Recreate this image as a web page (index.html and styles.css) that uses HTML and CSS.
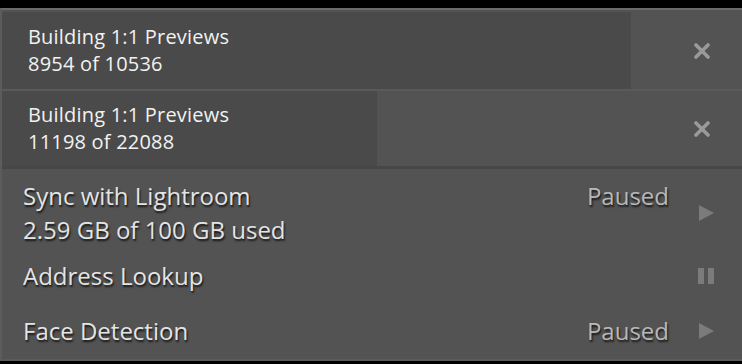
FILE: index.html
```html
<!DOCTYPE html>
<html lang="en">
<head>
  <meta charset="UTF-8" />
  <title>Activity Center</title>
  <link rel="stylesheet" href="styles.css">
</head>
<body>

<div class="panel">
  <div class="jobs">
    <div class="job" style="--p: 84.98%">
      <div class="job-text">
        <div>Building 1:1 Previews</div>
        <div>8954 of 10536</div>
      </div>
      <svg class="close" width="18" height="16" viewBox="0 0 18 16">
        <path d="M3 2 L15 14 M15 2 L3 14" stroke="#9a9a9a" stroke-width="3.6" stroke-linecap="round" />
      </svg>
    </div>
    <div class="job" style="--p: 50.70%">
      <div class="job-text">
        <div>Building 1:1 Previews</div>
        <div>11198 of 22088</div>
      </div>
      <svg class="close" width="18" height="16" viewBox="0 0 18 16">
        <path d="M3 2 L15 14 M15 2 L3 14" stroke="#9a9a9a" stroke-width="3.6" stroke-linecap="round" />
      </svg>
    </div>
  </div>

  <div class="tasks">
    <div class="task task-sync">
      <div class="task-name">
        <div>Sync with Lightroom</div>
        <div>2.59 GB of 100 GB used</div>
      </div>
      <div class="task-status">Paused</div>
      <svg class="task-icon" width="16" height="16" viewBox="0 0 16 16">
        <polygon points="1,0 16,8 1,16" fill="#7b7b7b" />
      </svg>
    </div>
    <div class="task task-address">
      <div class="task-name">Address Lookup</div>
      <svg class="task-icon" width="16" height="16" viewBox="0 0 16 16">
        <rect x="0" y="0" width="6" height="16" fill="#7b7b7b" />
        <rect x="10" y="0" width="6" height="16" fill="#7b7b7b" />
      </svg>
    </div>
    <div class="task task-face">
      <div class="task-name">Face Detection</div>
      <div class="task-status">Paused</div>
      <svg class="task-icon" width="16" height="16" viewBox="0 0 16 16">
        <polygon points="1,0 16,8 1,16" fill="#7b7b7b" />
      </svg>
    </div>
  </div>
</div>

</body>
</html>
```

FILE: styles.css
```css
* { margin: 0; padding: 0; box-sizing: border-box; }
html, body { height: 100%; overflow: hidden; }

body {
  background: #000;
  padding-top: 8px;
  font-family: 'Open Sans', 'Liberation Sans', sans-serif;
}

.panel {
  height: 353px;
  background: #535353;
  border-top: 2px solid #6b6b6b;
  border-left: 2px solid #5c5c5c;
  border-bottom: 2px solid #5a5a5a;
}

.jobs {
  padding-top: 2px;
  border-bottom: 3px solid #474747;
}

.job {
  height: 77px;
  display: flex;
  align-items: center;
  padding: 0 31px 0 26px;
  background: linear-gradient(to right, #4a4a4a var(--p), #535353 var(--p));
}
.job + .job { border-top: 2px solid #5a5a5a; }

.job-text {
  flex: 1;
  color: #f2f2f2;
  font-size: 20px;
  letter-spacing: 0.2px;
  line-height: 27px;
  margin-top: -2px;
}

.tasks {
  padding: 10px 28px 0 21px;
  color: #e4e4e4;
  font-size: 24px;
  line-height: 34px;
  text-shadow: 1px 2px 2px rgba(0, 0, 0, 0.75);
}

.task {
  display: flex;
  align-items: center;
}
.task-name { flex: 1; }

.task-status {
  color: #b8b8b8;
}
.task-sync .task-status { align-self: flex-start; }

.task-icon { margin-left: 29px; }
.task-address { margin-top: 12px; }
.task-face { margin-top: 21px; }
```
